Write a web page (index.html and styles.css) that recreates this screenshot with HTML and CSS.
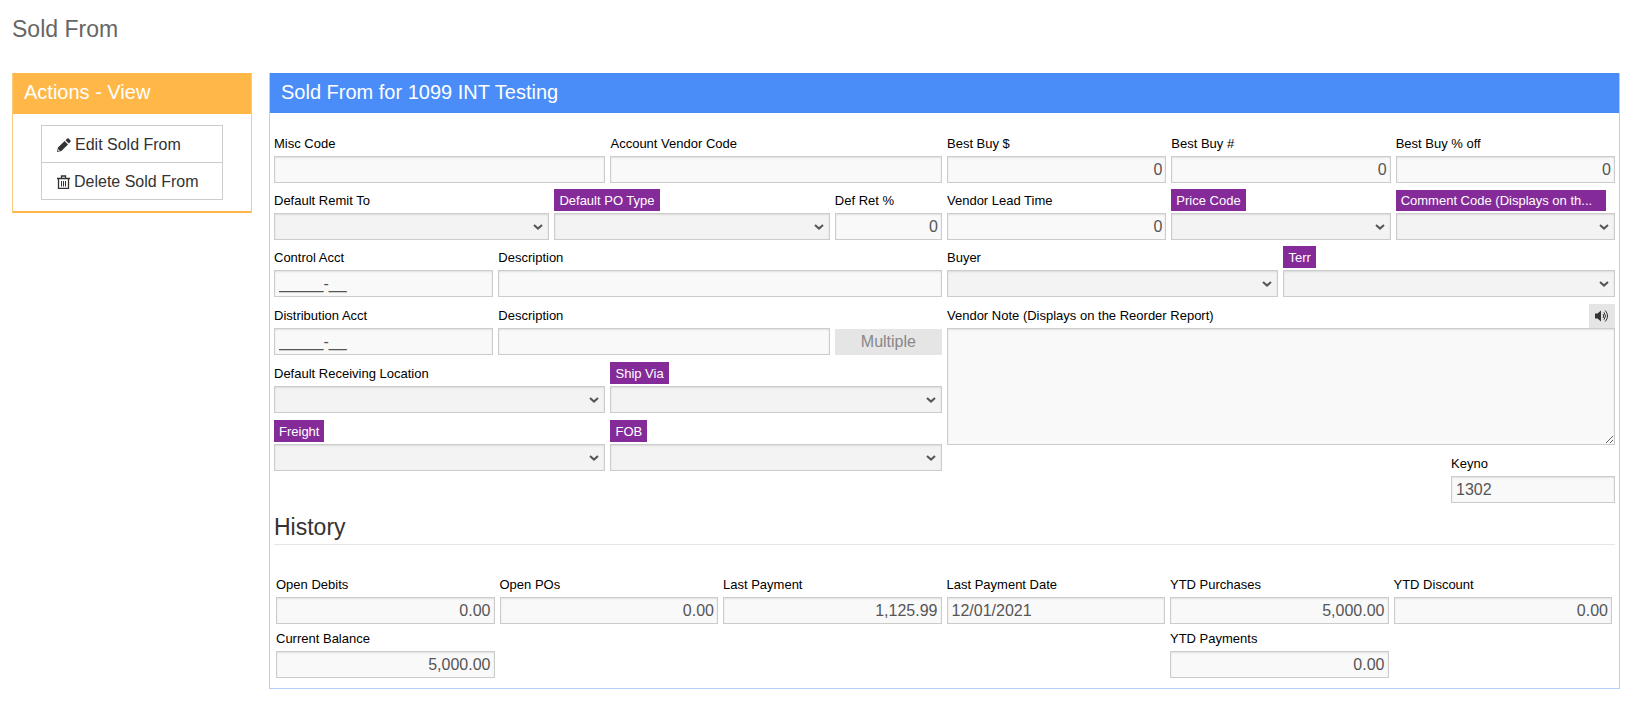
FILE: index.html
```html
<!DOCTYPE html>
<html lang="en">

<head>
  <meta charset="UTF-8" />
  <meta name="viewport" content="width=device-width, initial-scale=1.0" />
  <title>Sold From</title>
  <link rel="stylesheet" href="styles.css">
</head>

<body>
  <h1 class="page-title">Sold From</h1>

  <div class="page-content">
    <aside class="actions-box">
      <h2 class="box-title">Actions - View</h2>
      <div class="actions-body">
        <button type="button" class="action-button">
          <svg class="icon" viewBox="0 0 14 14" width="14" height="14">
            <path fill="#333" d="M0 14 L1 9.6 L7.6 3 L11 6.400 L4.400 13 Z M8.500 2.200 L10.200 0.500 Q10.900 0 11.600 0.500 L13.500 2.400 Q14 3.100 13.500 3.800 L11.800 5.500 Z" />
            <path fill="#fff" d="M1.300 11.200 L2.800 12.700 L1.700 13 L1 12.300 Z" />
          </svg>
          Edit Sold From
        </button>
        <button type="button" class="action-button">
          <svg class="icon" viewBox="0 0 13 14" width="13" height="14" fill="none" stroke="#333">
            <path d="M0 3.500 H13 M4.500 3 V1 H8.500 V3 M1.500 4 V13.500 H11.500 V4" stroke-width="1.300" />
            <path d="M4.500 6 V11.500 M6.500 6 V11.500 M8.500 6 V11.500" />
          </svg>
          Delete Sold From
        </button>
      </div>
    </aside>

    <main class="form-box">
      <h2 class="box-title">Sold From for 1099 INT Testing</h2>
      <form class="form-body">
        <div class="form-grid">
          <div class="field span-6">
            <label for="miscCode">Misc Code</label>
            <input type="text" id="miscCode" readonly />
          </div>
          <div class="field span-6">
            <label for="accountVendorCode">Account Vendor Code</label>
            <input type="text" id="accountVendorCode" readonly />
          </div>
          <div class="field span-4">
            <label for="bestBuyAmount">Best Buy $</label>
            <input type="text" id="bestBuyAmount" class="number" value="0" readonly />
          </div>
          <div class="field span-4">
            <label for="bestBuyNumber">Best Buy #</label>
            <input type="text" id="bestBuyNumber" class="number" value="0" readonly />
          </div>
          <div class="field span-4">
            <label for="bestBuyPercent">Best Buy % off</label>
            <input type="text" id="bestBuyPercent" class="number" value="0" readonly />
          </div>

          <div class="field span-5">
            <label for="remitTo">Default Remit To</label>
            <select id="remitTo"></select>
          </div>
          <div class="field span-5">
            <label for="poType" class="tag">Default PO Type</label>
            <select id="poType"></select>
          </div>
          <div class="field span-2">
            <label for="defRet">Def Ret %</label>
            <input type="text" id="defRet" class="number" value="0" readonly />
          </div>
          <div class="field span-4">
            <label for="leadTime">Vendor Lead Time</label>
            <input type="text" id="leadTime" class="number" value="0" readonly />
          </div>
          <div class="field span-4">
            <label for="priceCode" class="tag">Price Code</label>
            <select id="priceCode"></select>
          </div>
          <div class="field span-4">
            <label for="commentCode" class="tag tag-wide">Comment Code (Displays on th...</label>
            <select id="commentCode"></select>
          </div>

          <div class="field span-4">
            <label for="controlAcct">Control Acct</label>
            <input type="text" id="controlAcct" value="_____-__" readonly />
          </div>
          <div class="field span-8">
            <label for="controlDescription">Description</label>
            <input type="text" id="controlDescription" readonly />
          </div>
          <div class="field span-6">
            <label for="buyer">Buyer</label>
            <select id="buyer"></select>
          </div>
          <div class="field span-6">
            <label for="terr" class="tag">Terr</label>
            <select id="terr"></select>
          </div>
        </div>

        <div class="form-halves">
          <div class="half-grid">
            <div class="field span-4">
              <label for="distributionAcct">Distribution Acct</label>
              <input type="text" id="distributionAcct" value="_____-__" readonly />
            </div>
            <div class="field span-6">
              <label for="distributionDescription">Description</label>
              <input type="text" id="distributionDescription" readonly />
            </div>
            <button type="button" class="multiple-button span-2" disabled>Multiple</button>

            <div class="field span-6">
              <label for="receivingLocation">Default Receiving Location</label>
              <select id="receivingLocation"></select>
            </div>
            <div class="field span-6">
              <label for="shipVia" class="tag">Ship Via</label>
              <select id="shipVia"></select>
            </div>

            <div class="field span-6">
              <label for="freight" class="tag">Freight</label>
              <select id="freight"></select>
            </div>
            <div class="field span-6">
              <label for="fob" class="tag">FOB</label>
              <select id="fob"></select>
            </div>
          </div>

          <div class="note-column">
            <div class="note-header">
              <label for="vendorNote">Vendor Note (Displays on the Reorder Report)</label>
              <button type="button" class="sound-button" aria-label="Dictate">
                <svg viewBox="0 0 14 12" width="14" height="12" fill="none" stroke="#333">
                  <path d="M0 3.500 H2.500 L6 0.500 V11.500 L2.500 8.500 H0 Z" fill="#333" stroke="none" />
                  <path d="M8 4 Q9.500 6 8 8 M9 2.300 Q12 6 9 9.700 M10.300 0.500 Q14.800 6 10.300 11.500" />
                </svg>
              </button>
            </div>
            <textarea id="vendorNote" readonly></textarea>
            <div class="field keyno">
              <label for="keyno">Keyno</label>
              <input type="text" id="keyno" value="1302" readonly />
            </div>
          </div>
        </div>

        <h3 class="section-title">History</h3>

        <div class="history-grid">
          <div class="field">
            <label for="openDebits">Open Debits</label>
            <input type="text" id="openDebits" class="number" value="0.00" readonly />
          </div>
          <div class="field">
            <label for="openPos">Open POs</label>
            <input type="text" id="openPos" class="number" value="0.00" readonly />
          </div>
          <div class="field">
            <label for="lastPayment">Last Payment</label>
            <input type="text" id="lastPayment" class="number" value="1,125.99" readonly />
          </div>
          <div class="field">
            <label for="lastPaymentDate">Last Payment Date</label>
            <input type="text" id="lastPaymentDate" value="12/01/2021" readonly />
          </div>
          <div class="field">
            <label for="ytdPurchases">YTD Purchases</label>
            <input type="text" id="ytdPurchases" class="number" value="5,000.00" readonly />
          </div>
          <div class="field">
            <label for="ytdDiscount">YTD Discount</label>
            <input type="text" id="ytdDiscount" class="number" value="0.00" readonly />
          </div>
          <div class="field">
            <label for="currentBalance">Current Balance</label>
            <input type="text" id="currentBalance" class="number" value="5,000.00" readonly />
          </div>
          <div class="field ytd-payments">
            <label for="ytdPayments">YTD Payments</label>
            <input type="text" id="ytdPayments" class="number" value="0.00" readonly />
          </div>
        </div>
      </form>
    </main>
  </div>
</body>

</html>
```
FILE: styles.css
```css
* {
  box-sizing: border-box;
}

body {
  margin: 0;
  padding: 13px 8px 14px 12px;
  background-color: #ffffff;
  color: #333333;
  font-family: "Liberation Sans", Arial, sans-serif;
  font-size: 16px;
}

.page-title {
  margin: 0 0 28px;
  color: #666666;
  font-size: 23px;
  font-weight: 400;
  line-height: 32px;
}

.page-content {
  display: flex;
  align-items: flex-start;
  gap: 17px;
}

.actions-box {
  flex: 0 0 240px;
  border: 1px solid #fccb7e;
  border-top: none;
  border-bottom: 2px solid #ffb848;
}

.form-box {
  flex: 1;
  min-width: 0;
  border: 1px solid #b4cef8;
  border-top: none;
}

.box-title {
  margin: 0;
  padding: 0 11px 2px;
  color: #ffffff;
  font-size: 20px;
  font-weight: 400;
  line-height: 38px;
}

.actions-box .box-title {
  padding-bottom: 3px;
  background-color: #ffb848;
}

.form-box .box-title {
  background-color: #4b8df8;
}

.actions-body {
  display: flex;
  flex-direction: column;
  padding: 11px 28px;
}

.action-button {
  display: flex;
  align-items: center;
  gap: 4px;
  height: 38px;
  padding: 1px 15px 0;
  background-color: #ffffff;
  border: 1px solid #cccccc;
  color: #333333;
  font: inherit;
  cursor: pointer;
}

.action-button + .action-button {
  margin-top: -1px;
}

.form-body {
  padding: 19px 4px 10px;
}

.form-grid,
.half-grid {
  display: grid;
  grid-template-columns: repeat(24, minmax(0, 1fr));
  column-gap: 5px;
  row-gap: 6px;
}

.half-grid {
  grid-template-columns: repeat(12, minmax(0, 1fr));
  align-content: start;
  row-gap: 7px;
}

.form-halves {
  display: grid;
  grid-template-columns: repeat(2, minmax(0, 1fr));
  column-gap: 5px;
  margin-top: 7px;
}

.span-2 {
  grid-column: span 2;
}

.span-4 {
  grid-column: span 4;
}

.span-5 {
  grid-column: span 5;
}

.span-6 {
  grid-column: span 6;
}

.span-8 {
  grid-column: span 8;
}

.field {
  display: flex;
  flex-direction: column;
  align-items: flex-start;
}

label {
  margin-bottom: 2px;
  padding-top: 2px;
  color: #000000;
  font-size: 13px;
  line-height: 20px;
  white-space: nowrap;
}

.tag {
  padding: 2px 5px 0;
  background-color: #852b99;
  color: #ffffff;
}

.tag-wide {
  width: 96%;
  margin-top: 1px;
  padding-top: 1px;
}

input,
select,
textarea {
  width: 100%;
  height: 27px;
  padding: 0 3px 0 4px;
  background-color: #f9f9f9;
  border: 1px solid #cccccc;
  border-radius: 0;
  box-shadow: inset 0 1px 2px rgba(0, 0, 0, 0.1);
  color: #555555;
  font: inherit;
  outline: none;
}

select {
  appearance: none;
  background: #f3f3f3 url("data:image/svg+xml,%3Csvg xmlns='http://www.w3.org/2000/svg' width='10' height='6'%3E%3Cpath d='M1 1 L5 4.600 L9 1' fill='none' stroke='%23555' stroke-width='2'/%3E%3C/svg%3E") no-repeat right 5px center;
}

.number {
  text-align: right;
}

.multiple-button {
  align-self: end;
  height: 26px;
  padding: 0;
  background-color: #e5e5e5;
  border: none;
  color: #888888;
  font: inherit;
}

.note-header {
  display: flex;
  justify-content: space-between;
}

.sound-button {
  width: 26px;
  height: 24px;
  padding: 0;
  background-color: #e5e5e5;
  border: none;
}

.sound-button svg {
  display: block;
  margin: 0 auto;
}

textarea {
  display: block;
  height: 117px;
  resize: vertical;
}

.keyno {
  width: 164px;
  margin: 7px 0 0 auto;
}

.section-title {
  margin: 7px 0 28px;
  border-bottom: 1px solid #e5e5e5;
  color: #333333;
  font-size: 23px;
  font-weight: 400;
  line-height: 34px;
}

.history-grid {
  display: grid;
  grid-template-columns: repeat(6, minmax(0, 1fr));
  column-gap: 5px;
  row-gap: 3px;
  padding: 0 3px 0 2px;
}

.ytd-payments {
  grid-column: 5;
}
```
